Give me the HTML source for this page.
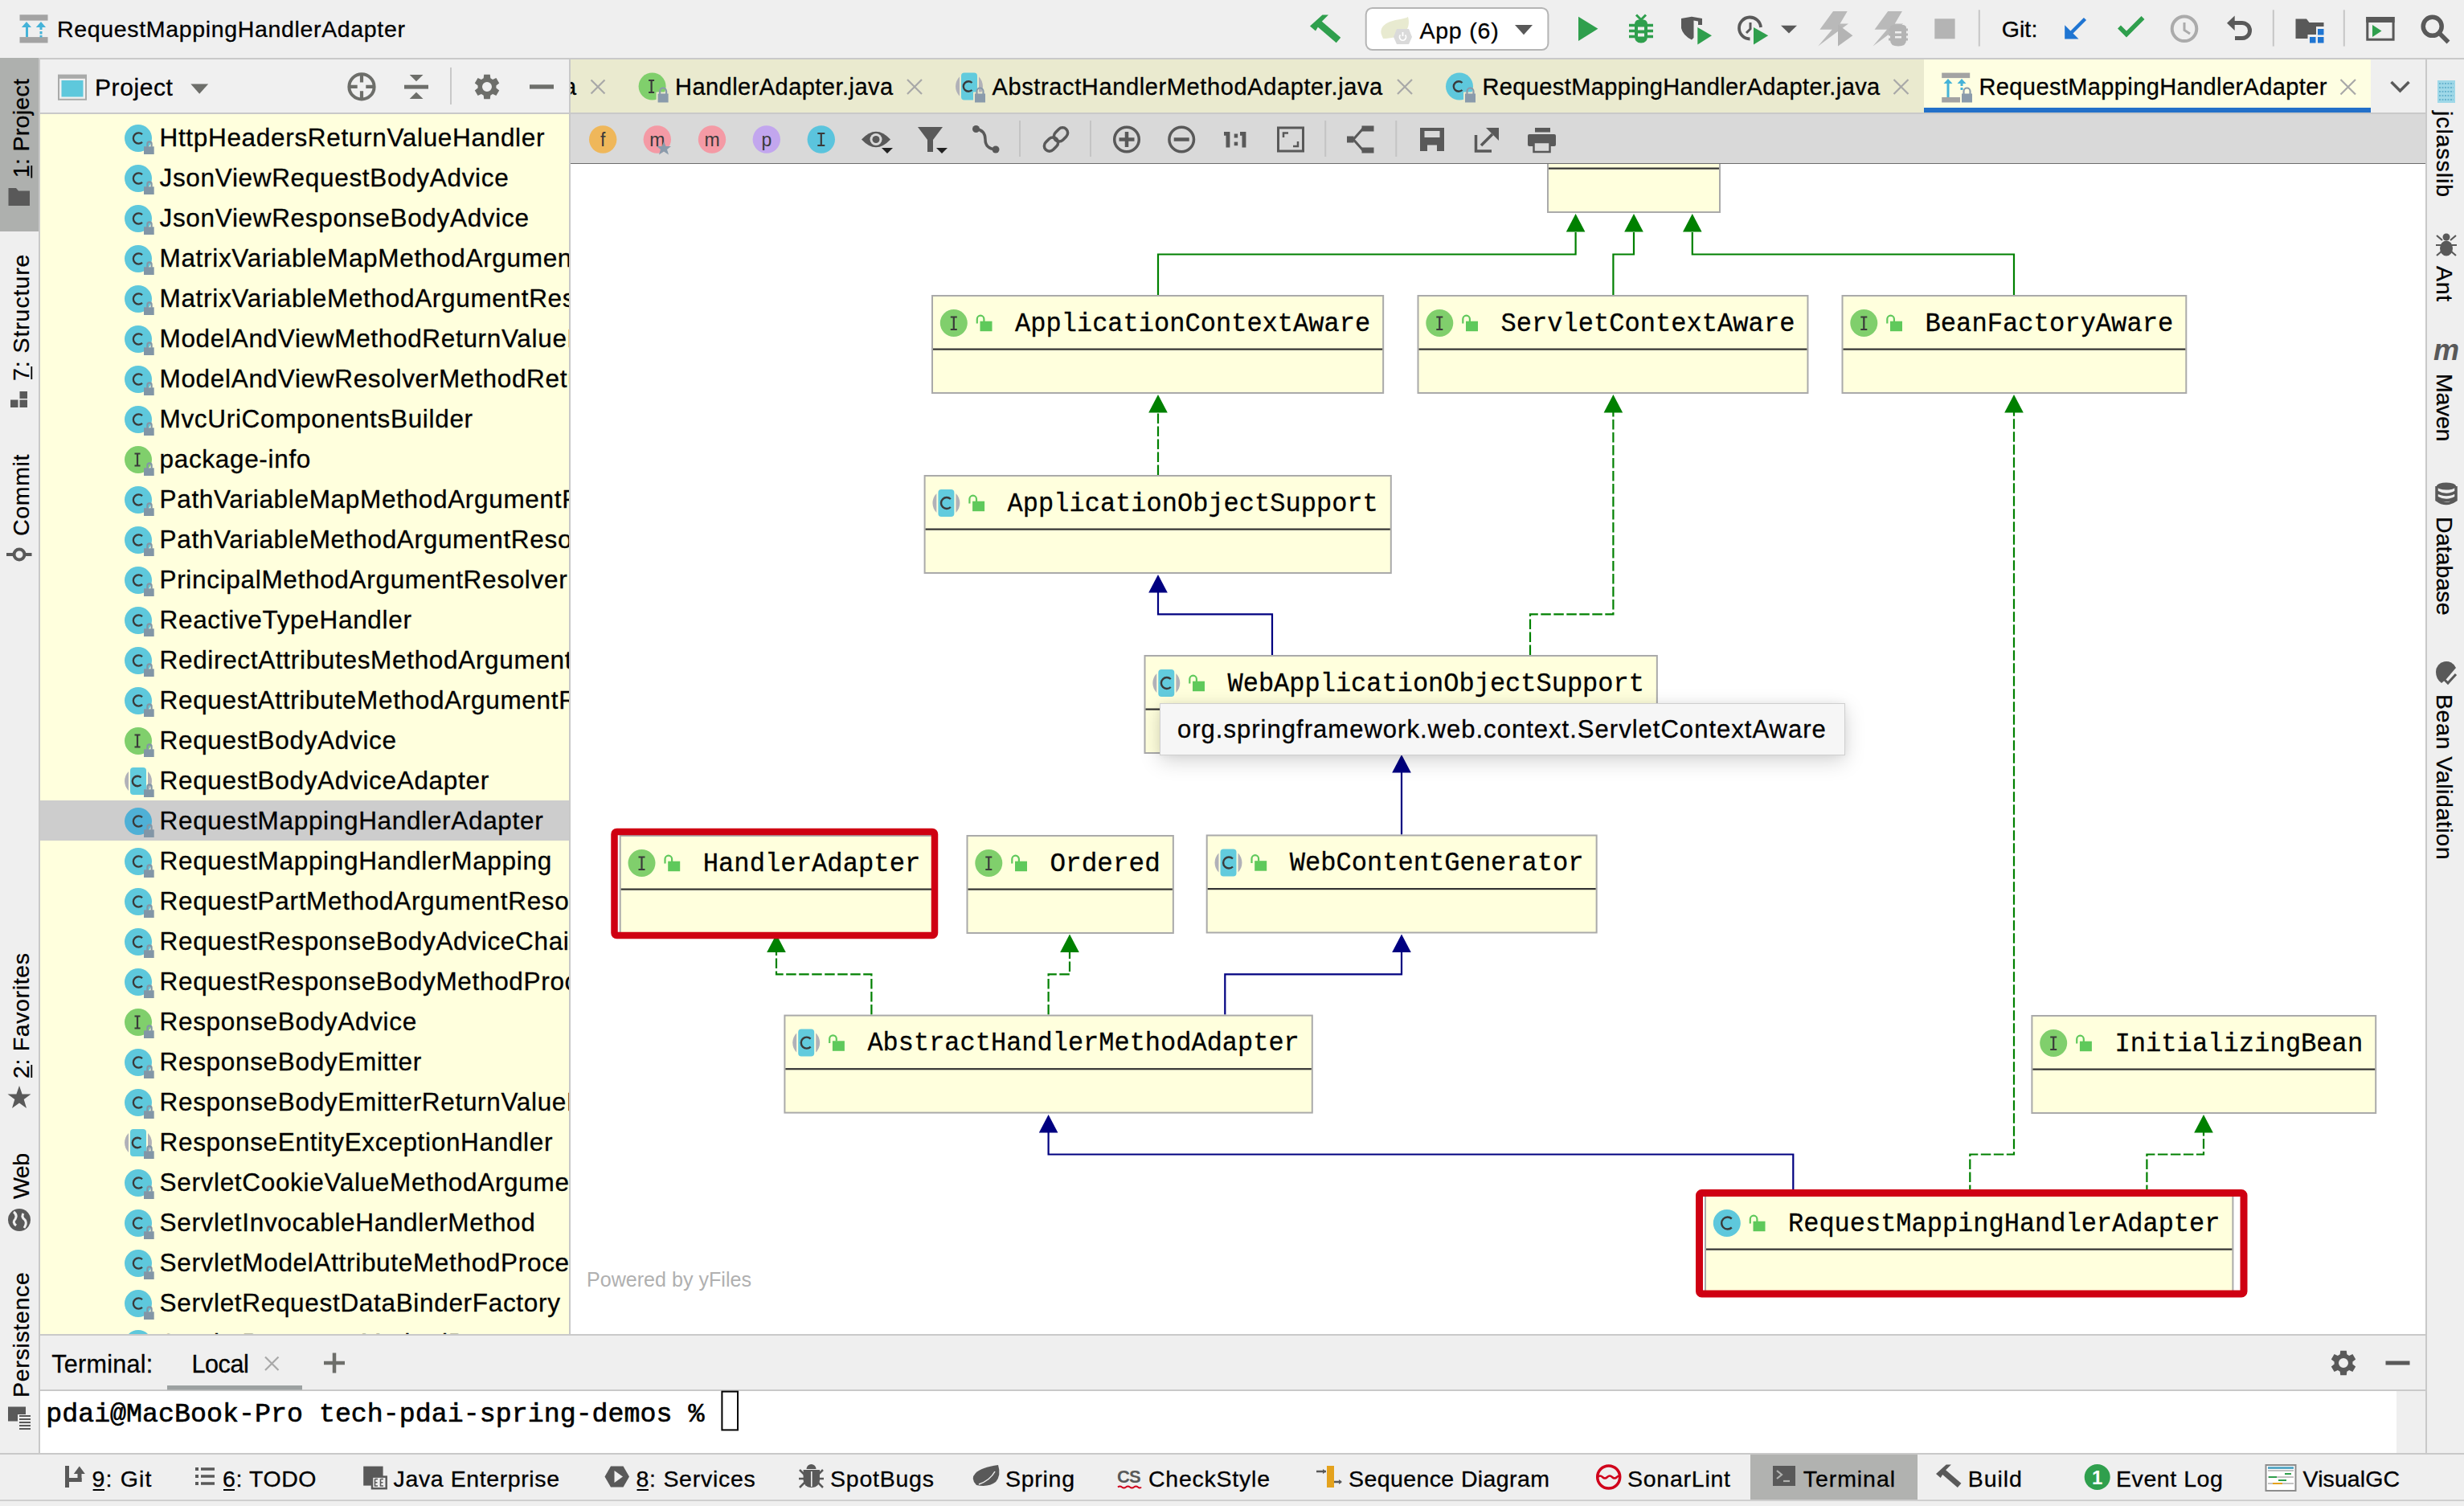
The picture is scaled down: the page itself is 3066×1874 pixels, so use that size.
<!DOCTYPE html>
<html><head><meta charset="utf-8">
<style>
*{margin:0;padding:0;box-sizing:border-box}
html,body{width:3066px;height:1874px;overflow:hidden;background:#efefef;font-family:"Liberation Sans",sans-serif;color:#000}
.a{position:absolute}
.t{position:absolute;white-space:pre;line-height:1;font-family:"Liberation Sans",sans-serif;-webkit-text-stroke:0.3px currentColor}
.m{position:absolute;white-space:pre;line-height:1;font-family:"Liberation Mono",monospace;-webkit-text-stroke:0.6px currentColor}
svg{position:absolute;overflow:visible}
</style></head><body>
<div class="a" style="left:0px;top:0px;width:3066px;height:72px;background:#efefef;"></div>
<div class="a" style="left:0px;top:72px;width:3066px;height:2px;background:#c9c9c9;"></div>
<div class="a" style="left:0px;top:74px;width:48px;height:1734px;background:#efefef;"></div>
<div class="a" style="left:48px;top:73px;width:2px;height:1735px;background:#c9c9c9;"></div>
<div class="a" style="left:0px;top:72px;width:48px;height:216px;background:#aeb0ae;"></div>
<div class="a" style="left:50px;top:74px;width:658px;height:66px;background:#f0f0f0;"></div>
<div class="a" style="left:50px;top:140px;width:658px;height:2px;background:#c9c9c9;"></div>
<div class="a" style="left:50px;top:142px;width:658px;height:1518px;background:#ffffdd;"></div>
<div class="a" style="left:708px;top:73px;width:2px;height:1587px;background:#c9c9c9;"></div>
<div class="a" style="left:710px;top:74px;width:2308px;height:67px;background:#eaeacf;"></div>
<div class="a" style="left:2394px;top:74px;width:556px;height:67px;background:#fefee2;"></div>
<div class="a" style="left:2394px;top:134px;width:556px;height:7px;background:#2370c9;"></div>
<div class="a" style="left:2950px;top:74px;width:68px;height:67px;background:#efefef;"></div>
<div class="a" style="left:710px;top:141px;width:2308px;height:62px;background:#d9d9d9;"></div>
<div class="a" style="left:710px;top:140px;width:2308px;height:2px;background:#c9c9c9;"></div>
<div class="a" style="left:710px;top:203px;width:2308px;height:2px;background:#6d6d6d;"></div>
<div class="a" style="left:710px;top:204px;width:2308px;height:1456px;background:#fff;"></div>
<div class="a" style="left:3018px;top:73px;width:2px;height:1735px;background:#c9c9c9;"></div>
<div class="a" style="left:3020px;top:74px;width:46px;height:1734px;background:#efefef;"></div>
<div class="a" style="left:50px;top:1660px;width:2968px;height:2px;background:#c9c9c9;"></div>
<div class="a" style="left:50px;top:1662px;width:2968px;height:67px;background:#efefef;"></div>
<div class="a" style="left:50px;top:1729px;width:2968px;height:2px;background:#c9c9c9;"></div>
<div class="a" style="left:50px;top:1731px;width:2932px;height:77px;background:#fff;"></div>
<div class="a" style="left:0px;top:1808px;width:3066px;height:2px;background:#c9c9c9;"></div>
<div class="a" style="left:0px;top:1810px;width:3066px;height:64px;background:#efefef;"></div>
<div class="a" style="left:0px;top:1866px;width:3066px;height:2px;background:#cfcfcf;"></div>
<div class="a" style="left:50px;top:142px;width:658px;height:1518px;overflow:hidden"><div class="t" style="margin-left:-50px;margin-top:-142px;left:198.5px;top:156.1825px;font-size:31.5px;letter-spacing:0.68px;color:#000;">HttpHeadersReturnValueHandler</div>
<div class="t" style="margin-left:-50px;margin-top:-142px;left:198.5px;top:206.1825px;font-size:31.5px;letter-spacing:0.68px;color:#000;">JsonViewRequestBodyAdvice</div>
<div class="t" style="margin-left:-50px;margin-top:-142px;left:198.5px;top:256.1825px;font-size:31.5px;letter-spacing:0.68px;color:#000;">JsonViewResponseBodyAdvice</div>
<div class="t" style="margin-left:-50px;margin-top:-142px;left:198.5px;top:306.1825px;font-size:31.5px;letter-spacing:0.68px;color:#000;">MatrixVariableMapMethodArgumentResolver</div>
<div class="t" style="margin-left:-50px;margin-top:-142px;left:198.5px;top:356.1825px;font-size:31.5px;letter-spacing:0.68px;color:#000;">MatrixVariableMethodArgumentResolver</div>
<div class="t" style="margin-left:-50px;margin-top:-142px;left:198.5px;top:406.1825px;font-size:31.5px;letter-spacing:0.68px;color:#000;">ModelAndViewMethodReturnValueHandler</div>
<div class="t" style="margin-left:-50px;margin-top:-142px;left:198.5px;top:456.1825px;font-size:31.5px;letter-spacing:0.68px;color:#000;">ModelAndViewResolverMethodReturnValueHandler</div>
<div class="t" style="margin-left:-50px;margin-top:-142px;left:198.5px;top:506.18249999999995px;font-size:31.5px;letter-spacing:0.68px;color:#000;">MvcUriComponentsBuilder</div>
<div class="t" style="margin-left:-50px;margin-top:-142px;left:198.5px;top:556.1825px;font-size:31.5px;letter-spacing:0.68px;color:#000;">package-info</div>
<div class="t" style="margin-left:-50px;margin-top:-142px;left:198.5px;top:606.1825px;font-size:31.5px;letter-spacing:0.68px;color:#000;">PathVariableMapMethodArgumentResolver</div>
<div class="t" style="margin-left:-50px;margin-top:-142px;left:198.5px;top:656.1825px;font-size:31.5px;letter-spacing:0.68px;color:#000;">PathVariableMethodArgumentResolver</div>
<div class="t" style="margin-left:-50px;margin-top:-142px;left:198.5px;top:706.1825px;font-size:31.5px;letter-spacing:0.68px;color:#000;">PrincipalMethodArgumentResolver</div>
<div class="t" style="margin-left:-50px;margin-top:-142px;left:198.5px;top:756.1825px;font-size:31.5px;letter-spacing:0.68px;color:#000;">ReactiveTypeHandler</div>
<div class="t" style="margin-left:-50px;margin-top:-142px;left:198.5px;top:806.1825px;font-size:31.5px;letter-spacing:0.68px;color:#000;">RedirectAttributesMethodArgumentResolver</div>
<div class="t" style="margin-left:-50px;margin-top:-142px;left:198.5px;top:856.1825px;font-size:31.5px;letter-spacing:0.68px;color:#000;">RequestAttributeMethodArgumentResolver</div>
<div class="t" style="margin-left:-50px;margin-top:-142px;left:198.5px;top:906.1825px;font-size:31.5px;letter-spacing:0.68px;color:#000;">RequestBodyAdvice</div>
<div class="t" style="margin-left:-50px;margin-top:-142px;left:198.5px;top:956.1825px;font-size:31.5px;letter-spacing:0.68px;color:#000;">RequestBodyAdviceAdapter</div>
<div class="a" style="margin-left:-50px;margin-top:-142px;left:50px;top:996px;width:658px;height:50px;background:#cdcdcd;"></div>
<div class="t" style="margin-left:-50px;margin-top:-142px;left:198.5px;top:1006.1825px;font-size:31.5px;letter-spacing:0.68px;color:#000;">RequestMappingHandlerAdapter</div>
<div class="t" style="margin-left:-50px;margin-top:-142px;left:198.5px;top:1056.1825px;font-size:31.5px;letter-spacing:0.68px;color:#000;">RequestMappingHandlerMapping</div>
<div class="t" style="margin-left:-50px;margin-top:-142px;left:198.5px;top:1106.1825px;font-size:31.5px;letter-spacing:0.68px;color:#000;">RequestPartMethodArgumentResolver</div>
<div class="t" style="margin-left:-50px;margin-top:-142px;left:198.5px;top:1156.1825px;font-size:31.5px;letter-spacing:0.68px;color:#000;">RequestResponseBodyAdviceChain</div>
<div class="t" style="margin-left:-50px;margin-top:-142px;left:198.5px;top:1206.1825px;font-size:31.5px;letter-spacing:0.68px;color:#000;">RequestResponseBodyMethodProcessor</div>
<div class="t" style="margin-left:-50px;margin-top:-142px;left:198.5px;top:1256.1825px;font-size:31.5px;letter-spacing:0.68px;color:#000;">ResponseBodyAdvice</div>
<div class="t" style="margin-left:-50px;margin-top:-142px;left:198.5px;top:1306.1825px;font-size:31.5px;letter-spacing:0.68px;color:#000;">ResponseBodyEmitter</div>
<div class="t" style="margin-left:-50px;margin-top:-142px;left:198.5px;top:1356.1825px;font-size:31.5px;letter-spacing:0.68px;color:#000;">ResponseBodyEmitterReturnValueHandler</div>
<div class="t" style="margin-left:-50px;margin-top:-142px;left:198.5px;top:1406.1825px;font-size:31.5px;letter-spacing:0.68px;color:#000;">ResponseEntityExceptionHandler</div>
<div class="t" style="margin-left:-50px;margin-top:-142px;left:198.5px;top:1456.1825px;font-size:31.5px;letter-spacing:0.68px;color:#000;">ServletCookieValueMethodArgumentResolver</div>
<div class="t" style="margin-left:-50px;margin-top:-142px;left:198.5px;top:1506.1825px;font-size:31.5px;letter-spacing:0.68px;color:#000;">ServletInvocableHandlerMethod</div>
<div class="t" style="margin-left:-50px;margin-top:-142px;left:198.5px;top:1556.1825px;font-size:31.5px;letter-spacing:0.68px;color:#000;">ServletModelAttributeMethodProcessor</div>
<div class="t" style="margin-left:-50px;margin-top:-142px;left:198.5px;top:1606.1825px;font-size:31.5px;letter-spacing:0.68px;color:#000;">ServletRequestDataBinderFactory</div>
<div class="t" style="margin-left:-50px;margin-top:-142px;left:198.5px;top:1656.1825px;font-size:31.5px;letter-spacing:0.68px;color:#000;">ServletResponseMethodProcessor</div>
<svg style="left:-50px;top:-142px" width="3066" height="1874"><circle cx="172" cy="172" r="17" fill="#5ec8dc"/><path d="M177 167.2A6.6 6.6 0 1 0 177 176.8" stroke="#3a3a3a" stroke-width="2.3" fill="none"/><rect x="179" y="182.3" width="12.7" height="9.7" fill="#8296a6"/><path d="M183.4 182.8v-3.8a2.6 2.6 0 0 1 5.2 0v3.8" stroke="#8296a6" stroke-width="2.2" fill="none"/><circle cx="172" cy="222" r="17" fill="#5ec8dc"/><path d="M177 217.2A6.6 6.6 0 1 0 177 226.8" stroke="#3a3a3a" stroke-width="2.3" fill="none"/><rect x="179" y="232.3" width="12.7" height="9.7" fill="#8296a6"/><path d="M183.4 232.8v-3.8a2.6 2.6 0 0 1 5.2 0v3.8" stroke="#8296a6" stroke-width="2.2" fill="none"/><circle cx="172" cy="272" r="17" fill="#5ec8dc"/><path d="M177 267.2A6.6 6.6 0 1 0 177 276.8" stroke="#3a3a3a" stroke-width="2.3" fill="none"/><rect x="179" y="282.3" width="12.7" height="9.7" fill="#8296a6"/><path d="M183.4 282.8v-3.8a2.6 2.6 0 0 1 5.2 0v3.8" stroke="#8296a6" stroke-width="2.2" fill="none"/><circle cx="172" cy="322" r="17" fill="#5ec8dc"/><path d="M177 317.2A6.6 6.6 0 1 0 177 326.8" stroke="#3a3a3a" stroke-width="2.3" fill="none"/><rect x="179" y="332.3" width="12.7" height="9.7" fill="#8296a6"/><path d="M183.4 332.8v-3.8a2.6 2.6 0 0 1 5.2 0v3.8" stroke="#8296a6" stroke-width="2.2" fill="none"/><circle cx="172" cy="372" r="17" fill="#5ec8dc"/><path d="M177 367.2A6.6 6.6 0 1 0 177 376.8" stroke="#3a3a3a" stroke-width="2.3" fill="none"/><rect x="179" y="382.3" width="12.7" height="9.7" fill="#8296a6"/><path d="M183.4 382.8v-3.8a2.6 2.6 0 0 1 5.2 0v3.8" stroke="#8296a6" stroke-width="2.2" fill="none"/><circle cx="172" cy="422" r="17" fill="#5ec8dc"/><path d="M177 417.2A6.6 6.6 0 1 0 177 426.8" stroke="#3a3a3a" stroke-width="2.3" fill="none"/><rect x="179" y="432.3" width="12.7" height="9.7" fill="#8296a6"/><path d="M183.4 432.8v-3.8a2.6 2.6 0 0 1 5.2 0v3.8" stroke="#8296a6" stroke-width="2.2" fill="none"/><circle cx="172" cy="472" r="17" fill="#5ec8dc"/><path d="M177 467.2A6.6 6.6 0 1 0 177 476.8" stroke="#3a3a3a" stroke-width="2.3" fill="none"/><rect x="179" y="482.3" width="12.7" height="9.7" fill="#8296a6"/><path d="M183.4 482.8v-3.8a2.6 2.6 0 0 1 5.2 0v3.8" stroke="#8296a6" stroke-width="2.2" fill="none"/><circle cx="172" cy="522" r="17" fill="#5ec8dc"/><path d="M177 517.2A6.6 6.6 0 1 0 177 526.8" stroke="#3a3a3a" stroke-width="2.3" fill="none"/><rect x="179" y="532.3" width="12.7" height="9.7" fill="#8296a6"/><path d="M183.4 532.8v-3.8a2.6 2.6 0 0 1 5.2 0v3.8" stroke="#8296a6" stroke-width="2.2" fill="none"/><circle cx="172" cy="572" r="17" fill="#80cf6c"/><path d="M167.5 564.5h7M167.5 579.5h7M171 564.5v15" stroke="#3a3a3a" stroke-width="2.2" fill="none"/><rect x="179" y="582.3" width="12.7" height="9.7" fill="#8296a6"/><path d="M183.4 582.8v-3.8a2.6 2.6 0 0 1 5.2 0v3.8" stroke="#8296a6" stroke-width="2.2" fill="none"/><circle cx="172" cy="622" r="17" fill="#5ec8dc"/><path d="M177 617.2A6.6 6.6 0 1 0 177 626.8" stroke="#3a3a3a" stroke-width="2.3" fill="none"/><rect x="179" y="632.3" width="12.7" height="9.7" fill="#8296a6"/><path d="M183.4 632.8v-3.8a2.6 2.6 0 0 1 5.2 0v3.8" stroke="#8296a6" stroke-width="2.2" fill="none"/><circle cx="172" cy="672" r="17" fill="#5ec8dc"/><path d="M177 667.2A6.6 6.6 0 1 0 177 676.8" stroke="#3a3a3a" stroke-width="2.3" fill="none"/><rect x="179" y="682.3" width="12.7" height="9.7" fill="#8296a6"/><path d="M183.4 682.8v-3.8a2.6 2.6 0 0 1 5.2 0v3.8" stroke="#8296a6" stroke-width="2.2" fill="none"/><circle cx="172" cy="722" r="17" fill="#5ec8dc"/><path d="M177 717.2A6.6 6.6 0 1 0 177 726.8" stroke="#3a3a3a" stroke-width="2.3" fill="none"/><rect x="179" y="732.3" width="12.7" height="9.7" fill="#8296a6"/><path d="M183.4 732.8v-3.8a2.6 2.6 0 0 1 5.2 0v3.8" stroke="#8296a6" stroke-width="2.2" fill="none"/><circle cx="172" cy="772" r="17" fill="#5ec8dc"/><path d="M177 767.2A6.6 6.6 0 1 0 177 776.8" stroke="#3a3a3a" stroke-width="2.3" fill="none"/><rect x="179" y="782.3" width="12.7" height="9.7" fill="#8296a6"/><path d="M183.4 782.8v-3.8a2.6 2.6 0 0 1 5.2 0v3.8" stroke="#8296a6" stroke-width="2.2" fill="none"/><circle cx="172" cy="822" r="17" fill="#5ec8dc"/><path d="M177 817.2A6.6 6.6 0 1 0 177 826.8" stroke="#3a3a3a" stroke-width="2.3" fill="none"/><rect x="179" y="832.3" width="12.7" height="9.7" fill="#8296a6"/><path d="M183.4 832.8v-3.8a2.6 2.6 0 0 1 5.2 0v3.8" stroke="#8296a6" stroke-width="2.2" fill="none"/><circle cx="172" cy="872" r="17" fill="#5ec8dc"/><path d="M177 867.2A6.6 6.6 0 1 0 177 876.8" stroke="#3a3a3a" stroke-width="2.3" fill="none"/><rect x="179" y="882.3" width="12.7" height="9.7" fill="#8296a6"/><path d="M183.4 882.8v-3.8a2.6 2.6 0 0 1 5.2 0v3.8" stroke="#8296a6" stroke-width="2.2" fill="none"/><circle cx="172" cy="922" r="17" fill="#80cf6c"/><path d="M167.5 914.5h7M167.5 929.5h7M171 914.5v15" stroke="#3a3a3a" stroke-width="2.2" fill="none"/><rect x="179" y="932.3" width="12.7" height="9.7" fill="#8296a6"/><path d="M183.4 932.8v-3.8a2.6 2.6 0 0 1 5.2 0v3.8" stroke="#8296a6" stroke-width="2.2" fill="none"/><path d="M160 960A17 17 0 0 0 160 984Z" fill="#b1b1b8"/><path d="M184 960A17 17 0 0 1 184 984Z" fill="#b1b1b8"/><rect x="162" y="955" width="20" height="34" rx="4" fill="#62cbdd"/><path d="M175.5 967.5A6.3 6.3 0 1 0 175.5 976.5" stroke="#3a3a3a" stroke-width="2.4" fill="none"/><rect x="179" y="982.3" width="12.7" height="9.7" fill="#8296a6"/><path d="M183.4 982.8v-3.8a2.6 2.6 0 0 1 5.2 0v3.8" stroke="#8296a6" stroke-width="2.2" fill="none"/><circle cx="172" cy="1022" r="17" fill="#4fb0d6"/><path d="M177 1017.2A6.6 6.6 0 1 0 177 1026.8" stroke="#3a3a3a" stroke-width="2.3" fill="none"/><rect x="179" y="1032.3" width="12.7" height="9.7" fill="#8296a6"/><path d="M183.4 1032.8v-3.8a2.6 2.6 0 0 1 5.2 0v3.8" stroke="#8296a6" stroke-width="2.2" fill="none"/><circle cx="172" cy="1072" r="17" fill="#5ec8dc"/><path d="M177 1067.2A6.6 6.6 0 1 0 177 1076.8" stroke="#3a3a3a" stroke-width="2.3" fill="none"/><rect x="179" y="1082.3" width="12.7" height="9.7" fill="#8296a6"/><path d="M183.4 1082.8v-3.8a2.6 2.6 0 0 1 5.2 0v3.8" stroke="#8296a6" stroke-width="2.2" fill="none"/><circle cx="172" cy="1122" r="17" fill="#5ec8dc"/><path d="M177 1117.2A6.6 6.6 0 1 0 177 1126.8" stroke="#3a3a3a" stroke-width="2.3" fill="none"/><rect x="179" y="1132.3" width="12.7" height="9.7" fill="#8296a6"/><path d="M183.4 1132.8v-3.8a2.6 2.6 0 0 1 5.2 0v3.8" stroke="#8296a6" stroke-width="2.2" fill="none"/><circle cx="172" cy="1172" r="17" fill="#5ec8dc"/><path d="M177 1167.2A6.6 6.6 0 1 0 177 1176.8" stroke="#3a3a3a" stroke-width="2.3" fill="none"/><rect x="179" y="1182.3" width="12.7" height="9.7" fill="#8296a6"/><path d="M183.4 1182.8v-3.8a2.6 2.6 0 0 1 5.2 0v3.8" stroke="#8296a6" stroke-width="2.2" fill="none"/><circle cx="172" cy="1222" r="17" fill="#5ec8dc"/><path d="M177 1217.2A6.6 6.6 0 1 0 177 1226.8" stroke="#3a3a3a" stroke-width="2.3" fill="none"/><rect x="179" y="1232.3" width="12.7" height="9.7" fill="#8296a6"/><path d="M183.4 1232.8v-3.8a2.6 2.6 0 0 1 5.2 0v3.8" stroke="#8296a6" stroke-width="2.2" fill="none"/><circle cx="172" cy="1272" r="17" fill="#80cf6c"/><path d="M167.5 1264.5h7M167.5 1279.5h7M171 1264.5v15" stroke="#3a3a3a" stroke-width="2.2" fill="none"/><rect x="179" y="1282.3" width="12.7" height="9.7" fill="#8296a6"/><path d="M183.4 1282.8v-3.8a2.6 2.6 0 0 1 5.2 0v3.8" stroke="#8296a6" stroke-width="2.2" fill="none"/><circle cx="172" cy="1322" r="17" fill="#5ec8dc"/><path d="M177 1317.2A6.6 6.6 0 1 0 177 1326.8" stroke="#3a3a3a" stroke-width="2.3" fill="none"/><rect x="179" y="1332.3" width="12.7" height="9.7" fill="#8296a6"/><path d="M183.4 1332.8v-3.8a2.6 2.6 0 0 1 5.2 0v3.8" stroke="#8296a6" stroke-width="2.2" fill="none"/><circle cx="172" cy="1372" r="17" fill="#5ec8dc"/><path d="M177 1367.2A6.6 6.6 0 1 0 177 1376.8" stroke="#3a3a3a" stroke-width="2.3" fill="none"/><rect x="179" y="1382.3" width="12.7" height="9.7" fill="#8296a6"/><path d="M183.4 1382.8v-3.8a2.6 2.6 0 0 1 5.2 0v3.8" stroke="#8296a6" stroke-width="2.2" fill="none"/><path d="M160 1410A17 17 0 0 0 160 1434Z" fill="#b1b1b8"/><path d="M184 1410A17 17 0 0 1 184 1434Z" fill="#b1b1b8"/><rect x="162" y="1405" width="20" height="34" rx="4" fill="#62cbdd"/><path d="M175.5 1417.5A6.3 6.3 0 1 0 175.5 1426.5" stroke="#3a3a3a" stroke-width="2.4" fill="none"/><rect x="179" y="1432.3" width="12.7" height="9.7" fill="#8296a6"/><path d="M183.4 1432.8v-3.8a2.6 2.6 0 0 1 5.2 0v3.8" stroke="#8296a6" stroke-width="2.2" fill="none"/><circle cx="172" cy="1472" r="17" fill="#5ec8dc"/><path d="M177 1467.2A6.6 6.6 0 1 0 177 1476.8" stroke="#3a3a3a" stroke-width="2.3" fill="none"/><rect x="179" y="1482.3" width="12.7" height="9.7" fill="#8296a6"/><path d="M183.4 1482.8v-3.8a2.6 2.6 0 0 1 5.2 0v3.8" stroke="#8296a6" stroke-width="2.2" fill="none"/><circle cx="172" cy="1522" r="17" fill="#5ec8dc"/><path d="M177 1517.2A6.6 6.6 0 1 0 177 1526.8" stroke="#3a3a3a" stroke-width="2.3" fill="none"/><rect x="179" y="1532.3" width="12.7" height="9.7" fill="#8296a6"/><path d="M183.4 1532.8v-3.8a2.6 2.6 0 0 1 5.2 0v3.8" stroke="#8296a6" stroke-width="2.2" fill="none"/><circle cx="172" cy="1572" r="17" fill="#5ec8dc"/><path d="M177 1567.2A6.6 6.6 0 1 0 177 1576.8" stroke="#3a3a3a" stroke-width="2.3" fill="none"/><rect x="179" y="1582.3" width="12.7" height="9.7" fill="#8296a6"/><path d="M183.4 1582.8v-3.8a2.6 2.6 0 0 1 5.2 0v3.8" stroke="#8296a6" stroke-width="2.2" fill="none"/><circle cx="172" cy="1622" r="17" fill="#5ec8dc"/><path d="M177 1617.2A6.6 6.6 0 1 0 177 1626.8" stroke="#3a3a3a" stroke-width="2.3" fill="none"/><rect x="179" y="1632.3" width="12.7" height="9.7" fill="#8296a6"/><path d="M183.4 1632.8v-3.8a2.6 2.6 0 0 1 5.2 0v3.8" stroke="#8296a6" stroke-width="2.2" fill="none"/><circle cx="172" cy="1672" r="17" fill="#5ec8dc"/><path d="M177 1667.2A6.6 6.6 0 1 0 177 1676.8" stroke="#3a3a3a" stroke-width="2.3" fill="none"/><rect x="179" y="1682.3" width="12.7" height="9.7" fill="#8296a6"/><path d="M183.4 1682.8v-3.8a2.6 2.6 0 0 1 5.2 0v3.8" stroke="#8296a6" stroke-width="2.2" fill="none"/></svg></div>
<svg style="left:710px;top:204px" width="2308" height="1456" viewBox="710 204 2308 1456"><defs><clipPath id="cv"><rect x="710" y="204" width="2308" height="1456"/></clipPath></defs><g clip-path="url(#cv)"><path d="M1441 367 L1441 316.5 L1960.6 316.5 L1960.6 289" stroke="#008000" stroke-width="2.2" fill="none"/><path d="M1960.6 266L1972.3999999999999 288.5H1948.8Z" fill="#008000"/><path d="M2007.4 367 L2007.4 316.5 L2033 316.5 L2033 289" stroke="#008000" stroke-width="2.2" fill="none"/><path d="M2033 266L2044.8 288.5H2021.2Z" fill="#008000"/><path d="M2506 367 L2506 316.5 L2105.8 316.5 L2105.8 289" stroke="#008000" stroke-width="2.2" fill="none"/><path d="M2105.8 266L2117.6000000000004 288.5H2094.0Z" fill="#008000"/><path d="M1441 591 L1441 513" stroke="#008000" stroke-width="2.2" fill="none" stroke-dasharray="12.5 3.5"/><path d="M1441 491L1452.8 513.5H1429.2Z" fill="#008000"/><path d="M1583 815 L1583 764.3 L1441 764.3 L1441 737" stroke="#000080" stroke-width="2.2" fill="none"/><path d="M1441 715L1452.8 737.5H1429.2Z" fill="#000080"/><path d="M1904 815 L1904 764.3 L2007.4 764.3 L2007.4 513" stroke="#008000" stroke-width="2.2" fill="none" stroke-dasharray="12.5 3.5"/><path d="M2007.4 491L2019.2 513.5H1995.6000000000001Z" fill="#008000"/><path d="M1744 1038.5 L1744 961" stroke="#000080" stroke-width="2.2" fill="none"/><path d="M1744 939L1755.8 961.5H1732.2Z" fill="#000080"/><path d="M1084.4 1262.6 L1084.4 1212.3 L966 1212.3 L966 1185" stroke="#008000" stroke-width="2.2" fill="none" stroke-dasharray="12.5 3.5"/><path d="M966 1162.5L977.8 1185.0H954.2Z" fill="#008000"/><path d="M1304.6 1262.6 L1304.6 1212.3 L1331 1212.3 L1331 1185" stroke="#008000" stroke-width="2.2" fill="none" stroke-dasharray="12.5 3.5"/><path d="M1331 1162.5L1342.8 1185.0H1319.2Z" fill="#008000"/><path d="M1524.3 1262.6 L1524.3 1212.3 L1744 1212.3 L1744 1185" stroke="#000080" stroke-width="2.2" fill="none"/><path d="M1744 1162.5L1755.8 1185.0H1732.2Z" fill="#000080"/><path d="M2231.3 1487 L2231.3 1436.5 L1304.6 1436.5 L1304.6 1409" stroke="#000080" stroke-width="2.2" fill="none"/><path d="M1304.6 1387L1316.3999999999999 1409.5H1292.8Z" fill="#000080"/><path d="M2451.3 1487 L2451.3 1436.5 L2506 1436.5 L2506 513" stroke="#008000" stroke-width="2.2" fill="none" stroke-dasharray="12.5 3.5"/><path d="M2506 491L2517.8 513.5H2494.2Z" fill="#008000"/><path d="M2671.4 1487 L2671.4 1436.5 L2742 1436.5 L2742 1409" stroke="#008000" stroke-width="2.2" fill="none" stroke-dasharray="12.5 3.5"/><path d="M2742 1387L2753.8 1409.5H2730.2Z" fill="#008000"/><rect x="1926" y="143" width="214" height="121" fill="#ffffdd" stroke="#aaaaaa" stroke-width="2"/><rect x="1927" y="208.5" width="212" height="2.2" fill="#333"/><rect x="1160" y="368" width="561.1500000000001" height="121" fill="#ffffdd" stroke="#aaaaaa" stroke-width="2"/><rect x="1161" y="433.5" width="559.1500000000001" height="2.2" fill="#333"/><circle cx="1186.8" cy="402" r="17" fill="#80cf6c"/><path d="M1182.8 394.5h8M1182.8 410h8M1186.8 394.5v15.5" stroke="#3a3a3a" stroke-width="2.2" fill="none"/><rect x="1219.5" y="399.7" width="15" height="12.5" fill="#5fc95b"/><path d="M1215.8 402.5V397a4.3 4.3 0 0 1 8.6 0V400" stroke="#5fc95b" stroke-width="2.2" fill="none"/><text x="1263" y="411.5" font-family="Liberation Mono" font-size="34" textLength="442.2" lengthAdjust="spacingAndGlyphs" fill="#000" stroke="#000" stroke-width="0.3">ApplicationContextAware</text><rect x="1764.5" y="368" width="484.95" height="121" fill="#ffffdd" stroke="#aaaaaa" stroke-width="2"/><rect x="1765.5" y="433.5" width="482.95" height="2.2" fill="#333"/><circle cx="1791.3" cy="402" r="17" fill="#80cf6c"/><path d="M1787.3 394.5h8M1787.3 410h8M1791.3 394.5v15.5" stroke="#3a3a3a" stroke-width="2.2" fill="none"/><rect x="1824.0" y="399.7" width="15" height="12.5" fill="#5fc95b"/><path d="M1820.3 402.5V397a4.3 4.3 0 0 1 8.6 0V400" stroke="#5fc95b" stroke-width="2.2" fill="none"/><text x="1867.5" y="411.5" font-family="Liberation Mono" font-size="34" textLength="365.9" lengthAdjust="spacingAndGlyphs" fill="#000" stroke="#000" stroke-width="0.3">ServletContextAware</text><rect x="2292.5" y="368" width="427.8" height="121" fill="#ffffdd" stroke="#aaaaaa" stroke-width="2"/><rect x="2293.5" y="433.5" width="425.8" height="2.2" fill="#333"/><circle cx="2319.3" cy="402" r="17" fill="#80cf6c"/><path d="M2315.3 394.5h8M2315.3 410h8M2319.3 394.5v15.5" stroke="#3a3a3a" stroke-width="2.2" fill="none"/><rect x="2352.0" y="399.7" width="15" height="12.5" fill="#5fc95b"/><path d="M2348.3 402.5V397a4.3 4.3 0 0 1 8.6 0V400" stroke="#5fc95b" stroke-width="2.2" fill="none"/><text x="2395.5" y="411.5" font-family="Liberation Mono" font-size="34" textLength="308.8" lengthAdjust="spacingAndGlyphs" fill="#000" stroke="#000" stroke-width="0.3">BeanFactoryAware</text><rect x="1150.6" y="592" width="580.2" height="121" fill="#ffffdd" stroke="#aaaaaa" stroke-width="2"/><rect x="1151.6" y="657.5" width="578.2" height="2.2" fill="#333"/><path d="M1165.3999999999999 614A17 17 0 0 0 1165.3999999999999 638Z" fill="#b1b1b8"/><path d="M1189.3999999999999 614A17 17 0 0 1 1189.3999999999999 638Z" fill="#b1b1b8"/><rect x="1167.3999999999999" y="609" width="20" height="34" rx="4" fill="#62cbdd"/><path d="M1182.8999999999999 621A7 7 0 1 0 1182.8999999999999 631" stroke="#3a3a3a" stroke-width="2.4" fill="none"/><rect x="1210.1" y="623.7" width="15" height="12.5" fill="#5fc95b"/><path d="M1206.3999999999999 626.5V621a4.3 4.3 0 0 1 8.6 0V624" stroke="#5fc95b" stroke-width="2.2" fill="none"/><text x="1253.6" y="635.5" font-family="Liberation Mono" font-size="34" textLength="461.2" lengthAdjust="spacingAndGlyphs" fill="#000" stroke="#000" stroke-width="0.3">ApplicationObjectSupport</text><rect x="1424.5" y="816" width="637.35" height="121" fill="#ffffdd" stroke="#aaaaaa" stroke-width="2"/><rect x="1425.5" y="881.5" width="635.35" height="2.2" fill="#333"/><path d="M1439.3 838A17 17 0 0 0 1439.3 862Z" fill="#b1b1b8"/><path d="M1463.3 838A17 17 0 0 1 1463.3 862Z" fill="#b1b1b8"/><rect x="1441.3" y="833" width="20" height="34" rx="4" fill="#62cbdd"/><path d="M1456.8 845A7 7 0 1 0 1456.8 855" stroke="#3a3a3a" stroke-width="2.4" fill="none"/><rect x="1484.0" y="847.7" width="15" height="12.5" fill="#5fc95b"/><path d="M1480.3 850.5V845a4.3 4.3 0 0 1 8.6 0V848" stroke="#5fc95b" stroke-width="2.2" fill="none"/><text x="1527.5" y="859.5" font-family="Liberation Mono" font-size="34" textLength="518.4" lengthAdjust="spacingAndGlyphs" fill="#000" stroke="#000" stroke-width="0.3">WebApplicationObjectSupport</text><rect x="771.7" y="1040" width="389.7" height="121" fill="#ffffdd" stroke="#aaaaaa" stroke-width="2"/><rect x="772.7" y="1105.5" width="387.7" height="2.2" fill="#333"/><circle cx="798.5" cy="1074" r="17" fill="#80cf6c"/><path d="M794.5 1066.5h8M794.5 1082h8M798.5 1066.5v15.5" stroke="#3a3a3a" stroke-width="2.2" fill="none"/><rect x="831.2" y="1071.7" width="15" height="12.5" fill="#5fc95b"/><path d="M827.5 1074.5V1069a4.3 4.3 0 0 1 8.6 0V1072" stroke="#5fc95b" stroke-width="2.2" fill="none"/><text x="874.7" y="1083.5" font-family="Liberation Mono" font-size="34" textLength="270.7" lengthAdjust="spacingAndGlyphs" fill="#000" stroke="#000" stroke-width="0.3">HandlerAdapter</text><rect x="1203.5" y="1040" width="256.35" height="121" fill="#ffffdd" stroke="#aaaaaa" stroke-width="2"/><rect x="1204.5" y="1105.5" width="254.35000000000002" height="2.2" fill="#333"/><circle cx="1230.3" cy="1074" r="17" fill="#80cf6c"/><path d="M1226.3 1066.5h8M1226.3 1082h8M1230.3 1066.5v15.5" stroke="#3a3a3a" stroke-width="2.2" fill="none"/><rect x="1263.0" y="1071.7" width="15" height="12.5" fill="#5fc95b"/><path d="M1259.3 1074.5V1069a4.3 4.3 0 0 1 8.6 0V1072" stroke="#5fc95b" stroke-width="2.2" fill="none"/><text x="1306.5" y="1083.5" font-family="Liberation Mono" font-size="34" textLength="137.3" lengthAdjust="spacingAndGlyphs" fill="#000" stroke="#000" stroke-width="0.3">Ordered</text><rect x="1501.7" y="1039.5" width="484.95" height="121" fill="#ffffdd" stroke="#aaaaaa" stroke-width="2"/><rect x="1502.7" y="1105.0" width="482.95" height="2.2" fill="#333"/><path d="M1516.5 1061.5A17 17 0 0 0 1516.5 1085.5Z" fill="#b1b1b8"/><path d="M1540.5 1061.5A17 17 0 0 1 1540.5 1085.5Z" fill="#b1b1b8"/><rect x="1518.5" y="1056.5" width="20" height="34" rx="4" fill="#62cbdd"/><path d="M1534.0 1068.5A7 7 0 1 0 1534.0 1078.5" stroke="#3a3a3a" stroke-width="2.4" fill="none"/><rect x="1561.2" y="1071.2" width="15" height="12.5" fill="#5fc95b"/><path d="M1557.5 1074.0V1068.5a4.3 4.3 0 0 1 8.6 0V1071.5" stroke="#5fc95b" stroke-width="2.2" fill="none"/><text x="1604.7" y="1083.0" font-family="Liberation Mono" font-size="34" textLength="365.9" lengthAdjust="spacingAndGlyphs" fill="#000" stroke="#000" stroke-width="0.3">WebContentGenerator</text><rect x="976.4" y="1263.6" width="656.4" height="121" fill="#ffffdd" stroke="#aaaaaa" stroke-width="2"/><rect x="977.4" y="1329.1" width="654.4" height="2.2" fill="#333"/><path d="M991.1999999999999 1285.6A17 17 0 0 0 991.1999999999999 1309.6Z" fill="#b1b1b8"/><path d="M1015.1999999999999 1285.6A17 17 0 0 1 1015.1999999999999 1309.6Z" fill="#b1b1b8"/><rect x="993.1999999999999" y="1280.6" width="20" height="34" rx="4" fill="#62cbdd"/><path d="M1008.6999999999999 1292.6A7 7 0 1 0 1008.6999999999999 1302.6" stroke="#3a3a3a" stroke-width="2.4" fill="none"/><rect x="1035.9" y="1295.3" width="15" height="12.5" fill="#5fc95b"/><path d="M1032.2 1298.1V1292.6a4.3 4.3 0 0 1 8.6 0V1295.6" stroke="#5fc95b" stroke-width="2.2" fill="none"/><text x="1079.4" y="1307.1" font-family="Liberation Mono" font-size="34" textLength="537.4" lengthAdjust="spacingAndGlyphs" fill="#000" stroke="#000" stroke-width="0.3">AbstractHandlerMethodAdapter</text><rect x="2528.4" y="1264" width="427.8" height="121" fill="#ffffdd" stroke="#aaaaaa" stroke-width="2"/><rect x="2529.4" y="1329.5" width="425.8" height="2.2" fill="#333"/><circle cx="2555.2000000000003" cy="1298" r="17" fill="#80cf6c"/><path d="M2551.2000000000003 1290.5h8M2551.2000000000003 1306h8M2555.2000000000003 1290.5v15.5" stroke="#3a3a3a" stroke-width="2.2" fill="none"/><rect x="2587.9" y="1295.7" width="15" height="12.5" fill="#5fc95b"/><path d="M2584.2000000000003 1298.5V1293a4.3 4.3 0 0 1 8.6 0V1296" stroke="#5fc95b" stroke-width="2.2" fill="none"/><text x="2631.4" y="1307.5" font-family="Liberation Mono" font-size="34" textLength="308.8" lengthAdjust="spacingAndGlyphs" fill="#000" stroke="#000" stroke-width="0.3">InitializingBean</text><rect x="2122" y="1488" width="656.4" height="121" fill="#ffffdd" stroke="#aaaaaa" stroke-width="2"/><rect x="2123" y="1553.5" width="654.4" height="2.2" fill="#333"/><circle cx="2148.8" cy="1522" r="17" fill="#5ec8dc"/><path d="M2154.8 1516.5A7.5 7.5 0 1 0 2154.8 1527.5" stroke="#3a3a3a" stroke-width="2.4" fill="none"/><rect x="2181.5" y="1519.7" width="15" height="12.5" fill="#5fc95b"/><path d="M2177.8 1522.5V1517a4.3 4.3 0 0 1 8.6 0V1520" stroke="#5fc95b" stroke-width="2.2" fill="none"/><text x="2225" y="1531.5" font-family="Liberation Mono" font-size="34" textLength="537.4" lengthAdjust="spacingAndGlyphs" fill="#000" stroke="#000" stroke-width="0.3">RequestMappingHandlerAdapter</text><rect x="764.5" y="1035" width="398.5" height="129" rx="3" fill="none" stroke="#cf0012" stroke-width="8.5"/><rect x="2114.5" y="1484.5" width="677.5" height="125.5" rx="3" fill="none" stroke="#cf0012" stroke-width="9"/><text x="730" y="1601" font-family="Liberation Sans" font-size="26.5" textLength="205" lengthAdjust="spacingAndGlyphs" fill="#b0b0b0">Powered by yFiles</text></g></svg>
<div class="a" style="left:1443px;top:875px;width:853px;height:65px;background:#f6f6f6;border:1px solid #cfcfcf;box-shadow:0 7px 26px rgba(0,0,0,0.17),0 0 10px rgba(0,0,0,0.06)"></div>
<div class="t" style="left:1465px;top:892px;font-size:31px;letter-spacing:1.02px;color:#000">org.springframework.web.context.ServletContextAware</div>
<svg style="left:0;top:0" width="3066" height="1874"><rect x="24.5" y="18.3" width="35" height="7.3" fill="#a3a3a3"/><rect x="24.5" y="46.1" width="35" height="7.3" fill="#a3a3a3"/><path d="M26.9 34L33 27L39 34H35V46H32V34Z" fill="#45b3d8"/><path d="M44.8 34L51 27L57 34H52.5V37H49.5V34ZM49.5 39h3v3.5h-3zM49.5 44h3v2.5h-3z" fill="#45b3d8"/><path d="M1630 32.5L1645.5 18.5H1653L1649 22.5L1643 28.5L1637 38.5Z" fill="#2f9f4d"/><path d="M1641 29L1665.5 50" stroke="#2f9f4d" stroke-width="8.5"/><rect x="1699.7" y="9.9" width="226.7" height="52.2" rx="8" fill="#fff" stroke="#b5b5b5" stroke-width="2"/><path d="M1719 43C1716 33 1726 26 1742 24C1749 23 1752 21 1752 21C1754 28 1753 35 1748 40C1742 46 1730 48 1721 48Z" fill="#e8ead0"/><path d="M1738 36H1753L1757 46L1753 55H1738L1734 46Z" fill="#dadada"/><path d="M1742.5 43.5A4 4 0 1 0 1748.5 43.5M1745.5 40V45" stroke="#fff" stroke-width="1.8" fill="none"/><path d="M1885 31H1907L1896 43.3Z" fill="#595959"/><path d="M1964 20.8V51L1988.4 35.8Z" fill="#2f9f4d"/><path d="M2036 18.5L2042 24.5M2048 18.5L2042 24.5" stroke="#2f9f4d" stroke-width="3"/><path d="M2034 30Q2034 24 2042 24Q2050 24 2050 30V45Q2050 53.5 2042 53.5Q2034 53.5 2034 45Z" fill="#2f9f4d"/><path d="M2027 31.5H2057M2027 38.5H2057M2027 45.5H2057" stroke="#2f9f4d" stroke-width="3.5"/><rect x="2038" y="33.5" width="8" height="4" fill="#efefef"/><rect x="2038" y="41.5" width="8" height="4" fill="#efefef"/><path d="M2092 23L2105 20.8L2118 23V31H2113V26.5L2107.5 25.5V47L2105 49.5Q2094 44 2092 35Z" fill="#595959"/><path d="M2112.3 33.9V55.5L2130 44.3Z" fill="#2f9f4d"/><path d="M2191 34A13.5 13.5 0 1 0 2177.5 48.5" stroke="#595959" stroke-width="3.8" fill="none"/><path d="M2178 28V36L2173 41" stroke="#595959" stroke-width="3" fill="none"/><path d="M2182 33.9V55.5L2200.2 44.3Z" fill="#2f9f4d"/><path d="M2216 31.8H2236L2226 41.5Z" fill="#595959"/><path transform="translate(0 0)" d="M2281 14.1H2298.7L2289.6 29.4H2300L2262.2 57.4L2279.8 36.7H2264.4Z" fill="#b9b9b9"/><path transform="translate(68.2 0)" d="M2281 14.1H2298.7L2289.6 29.4H2300L2262.2 57.4L2279.8 36.7H2264.4Z" fill="#b9b9b9"/><path d="M2287 30.6V57.4L2305.4 44.2Z" fill="#b4b4b4"/><path d="M2352 34Q2352 30.6 2362 30.6Q2372 30.6 2372 34V50Q2372 57.6 2362 57.6Q2352 57.6 2352 50Z" fill="#b4b4b4"/><path d="M2350 37H2374M2350 43H2374M2350 49H2374" stroke="#b4b4b4" stroke-width="3"/><rect x="2358" y="39" width="8" height="2.5" fill="#efefef"/><rect x="2358" y="45" width="8" height="2.5" fill="#efefef"/><rect x="2407.3" y="23.3" width="25.3" height="25" fill="#b4b4b4"/><rect x="2461.8" y="12.3" width="2" height="45.3" fill="#c6c6c6"/><rect x="2827.8" y="12.3" width="2" height="45.3" fill="#c6c6c6"/><rect x="2915.8" y="12.3" width="2" height="45.3" fill="#c6c6c6"/><path d="M2569.2 31.2V48.5H2586.5Z" fill="#1f75d2"/><path d="M2576 42L2594.5 23.5" stroke="#1f75d2" stroke-width="4.5"/><path d="M2637 33.5L2646 42.5L2666.5 22" stroke="#2f9f4d" stroke-width="5.5" fill="none"/><circle cx="2718" cy="35.8" r="15.3" stroke="#ababab" stroke-width="4" fill="none"/><path d="M2718 28V37.5L2725 42" stroke="#ababab" stroke-width="3" fill="none"/><path d="M2771 28.7L2780.7 19.4V37.9Z" fill="#595959"/><path d="M2779 28.5H2790A9.5 9.5 0 0 1 2790 47.5H2781" stroke="#595959" stroke-width="5" fill="none"/><path d="M2856.5 23.5H2870L2873.5 28H2891.5V33H2882V43H2871.5V48H2856.5Z" fill="#595959"/><rect x="2884" y="36" width="7.5" height="7.5" fill="#1f75d2"/><rect x="2874" y="46" width="7.5" height="7.5" fill="#1f75d2"/><rect x="2884" y="46" width="7.5" height="7.5" fill="#1f75d2"/><rect x="2945.8" y="22.5" width="32.3" height="26.7" stroke="#595959" stroke-width="3" fill="none"/><rect x="2944.3" y="21" width="35.3" height="7" fill="#595959"/><path d="M2952 31V46L2963.5 38.5Z" fill="#2f9f4d"/><circle cx="3026.7" cy="32.8" r="11.5" stroke="#595959" stroke-width="5.5" fill="none"/><path d="M3034.5 40.5L3046.5 52.5" stroke="#595959" stroke-width="5.5"/><rect x="73" y="93.8" width="34" height="30" fill="none" stroke="#a9aaa9" stroke-width="2"/><rect x="72" y="92.8" width="36" height="5" fill="#a9aaa9"/><rect x="76.5" y="100" width="27" height="20.5" fill="#5ec8dc"/><path d="M237.3 104.5H259.2L248.2 116.8Z" fill="#6d6e6a"/><circle cx="450" cy="107.9" r="15.6" stroke="#6d6e6a" stroke-width="4" fill="none"/><path d="M450 92V102.4M450 113.3V124M434 107.9H444.7M455.3 107.9H466" stroke="#6d6e6a" stroke-width="4.2"/><path d="M509.7 93H526.5L518 101.2Z M509.7 123H526.5L518 114.7Z" fill="#6d6e6a"/><rect x="503" y="105.7" width="30" height="4.9" fill="#6d6e6a"/><rect x="560" y="84" width="2" height="46" fill="#c8c8c8"/><path d="M602.2 92.7 L609.8 92.7 L610.3 97.3 L613.1 98.9 L617.4 97.0 L621.2 103.6 L617.4 106.4 L617.4 109.6 L621.2 112.4 L617.4 119.0 L613.1 117.1 L610.3 118.7 L609.8 123.3 L602.2 123.3 L601.7 118.7 L598.9 117.1 L594.6 119.0 L590.8 112.4 L594.6 109.6 L594.6 106.4 L590.8 103.6 L594.6 97.0 L598.9 98.9 L601.7 97.3Z M612 108A6 6 0 1 0 600 108A6 6 0 1 0 612 108Z" fill="#6d6e6a" fill-rule="evenodd"/><rect x="659" y="105.3" width="30" height="5.3" fill="#6d6e6a"/><path d="M735.5 99.5L752.5 116.5M752.5 99.5L735.5 116.5" stroke="#a8a8a8" stroke-width="2.2"/><circle cx="811.6" cy="107.5" r="17" fill="#80cf6c"/><path d="M807.1 100.0h7M807.1 115.0h7M810.6 100.0v15" stroke="#3a3a3a" stroke-width="2.2" fill="none"/><rect x="816.6" y="114.5" width="17" height="15" fill="#eaeacf"/><rect x="818.6" y="116.5" width="13" height="11" fill="#8a9bab"/><path d="M821.1 117.5v-4a4 4 0 0 1 8 0v4" stroke="#8a9bab" stroke-width="2.2" fill="none"/><path d="M1129 99L1147 117M1147 99L1129 117" stroke="#a8a8a8" stroke-width="2.2"/><path d="M1194 95.5A17 17 0 0 0 1194 119.5Z" fill="#b1b1b8"/><path d="M1218 95.5A17 17 0 0 1 1218 119.5Z" fill="#b1b1b8"/><rect x="1196" y="90.5" width="20" height="34" rx="4" fill="#62cbdd"/><path d="M1209.5 103.0A6.3 6.3 0 1 0 1209.5 112.0" stroke="#3a3a3a" stroke-width="2.4" fill="none"/><rect x="1211" y="114.5" width="17" height="15" fill="#eaeacf"/><rect x="1213" y="116.5" width="13" height="11" fill="#8a9bab"/><path d="M1215.5 117.5v-4a4 4 0 0 1 8 0v4" stroke="#8a9bab" stroke-width="2.2" fill="none"/><path d="M1739 99L1757 117M1757 99L1739 117" stroke="#a8a8a8" stroke-width="2.2"/><circle cx="1816" cy="107.5" r="17" fill="#5ec8dc"/><path d="M1819.5 103.0A6.3 6.3 0 1 0 1819.5 112.0" stroke="#3a3a3a" stroke-width="2.4" fill="none"/><rect x="1821" y="114.5" width="17" height="15" fill="#eaeacf"/><rect x="1823" y="116.5" width="13" height="11" fill="#8a9bab"/><path d="M1825.5 117.5v-4a4 4 0 0 1 8 0v4" stroke="#8a9bab" stroke-width="2.2" fill="none"/><path d="M2356.5 99L2374.5 117M2374.5 99L2356.5 117" stroke="#a8a8a8" stroke-width="2.2"/><rect x="2416.2" y="90.6" width="35" height="6.5" fill="#a3a3a3"/><rect x="2416.2" y="121" width="35" height="6.5" fill="#a3a3a3"/><path d="M2418.5 104L2424 98L2429.5 104H2425.5V121H2422.5V104Z" fill="#45b3d8"/><path d="M2435.5 104L2441 98L2446.5 104H2442.5V107H2439.5V104ZM2439.5 109h3v3h-3z" fill="#45b3d8"/><rect x="2439" y="114.5" width="17" height="15" fill="#fefee2"/><rect x="2441" y="116.5" width="13" height="11" fill="#8a9bab"/><path d="M2443.5 117.5v-4a4 4 0 0 1 8 0v4" stroke="#8a9bab" stroke-width="2.2" fill="none"/><path d="M2912.5 99L2931 117.5M2931 99L2912.5 117.5" stroke="#a8a8a8" stroke-width="2.2"/><path d="M2975.5 102L2986.5 113L2997.5 102" stroke="#595959" stroke-width="3.5" fill="none"/><circle cx="750.2" cy="173.5" r="17.2" fill="#efb75a"/><text x="750.2" y="181.5" text-anchor="middle" font-family="Liberation Sans" font-size="23" fill="#3a3a3a">f</text><circle cx="817.8" cy="173.5" r="17.2" fill="#f49aa5"/><text x="817.8" y="181.5" text-anchor="middle" font-family="Liberation Sans" font-size="23" fill="#3a3a3a">m</text><path d="M826 176L828.5 182H835L830 186L832 192.5L826 188.5L820 192.5L822 186L817 182H823.5Z" fill="#8a9bab"/><circle cx="886" cy="173.5" r="17.2" fill="#f49aa5"/><text x="886" y="181.5" text-anchor="middle" font-family="Liberation Sans" font-size="23" fill="#3a3a3a">m</text><circle cx="953.8" cy="173.5" r="17.2" fill="#c2a6ee"/><text x="953.8" y="181.5" text-anchor="middle" font-family="Liberation Sans" font-size="23" fill="#3a3a3a">p</text><circle cx="1021.8" cy="173.5" r="17.2" fill="#5bc4dd"/><path d="M1017.3 166h9M1017.3 181h9M1021.8 166v15" stroke="#3a3a3a" stroke-width="2.2" fill="none"/><path d="M1072 173.5Q1090 154 1108 173.5Q1090 193 1072 173.5Z" fill="#595959"/><circle cx="1090" cy="173.5" r="7.5" fill="#d9d9d9"/><circle cx="1090" cy="173.5" r="4.5" fill="#595959"/><path d="M1097 184H1111L1104 191Z" fill="#222"/><path d="M1142 158H1173L1161 174V189H1154V174Z" fill="#595959"/><path d="M1165 184H1179L1172 191Z" fill="#222"/><circle cx="1214.5" cy="160.5" r="4.5" fill="#595959"/><circle cx="1239" cy="186" r="4.5" fill="#595959"/><path d="M1214.5 160.5Q1226 162 1226 173.5Q1226 185 1239 186" stroke="#595959" stroke-width="3.5" fill="none"/><rect x="1268" y="150" width="2" height="45" fill="#c4c4c4"/><rect x="1356" y="150" width="2" height="45" fill="#c4c4c4"/><rect x="1648.2" y="150" width="2" height="45" fill="#c4c4c4"/><rect x="1736.3" y="150" width="2" height="45" fill="#c4c4c4"/><g transform="rotate(-45 1314 173.5)"><rect x="1296" y="167" width="19" height="13" rx="6.5" stroke="#595959" stroke-width="3.5" fill="none"/><rect x="1313" y="167" width="19" height="13" rx="6.5" stroke="#595959" stroke-width="3.5" fill="none"/></g><circle cx="1402" cy="173.5" r="15.3" stroke="#595959" stroke-width="3.5" fill="none"/><path d="M1392.5 173.5H1411.5M1402 164V183" stroke="#595959" stroke-width="4.5"/><circle cx="1470.2" cy="173.5" r="15.3" stroke="#595959" stroke-width="3.5" fill="none"/><path d="M1460.7 173.5H1479.7" stroke="#595959" stroke-width="4.5"/><path d="M1523 164.1H1530.4V183.6H1525.5V168.8H1523Z M1543 164.1H1550.4V183.6H1545.5V168.8H1543Z" fill="#595959"/><rect x="1535.7" y="166.5" width="4.5" height="5" fill="#595959"/><rect x="1535.7" y="176.6" width="4.5" height="4.6" fill="#595959"/><rect x="1590.5" y="159" width="31" height="29" stroke="#595959" stroke-width="3" fill="none"/><path d="M1597 171V165.5H1603M1615 176V182H1609" stroke="#595959" stroke-width="2.5" fill="none"/><rect x="1676" y="169.5" width="8.5" height="8" fill="#595959"/><rect x="1694.5" y="156.5" width="15" height="7" fill="#595959"/><rect x="1694.5" y="183.5" width="15" height="7" fill="#595959"/><path d="M1684 173.5L1696 160M1684 173.5L1696 187" stroke="#595959" stroke-width="3"/><path d="M1767 159H1797V188H1767Z" fill="#595959"/><rect x="1772.5" y="163" width="19" height="8" fill="#d9d9d9"/><rect x="1776" y="180.5" width="12" height="7.5" fill="#d9d9d9"/><path d="M1836.5 168V188H1856" stroke="#595959" stroke-width="3.5" fill="none"/><path d="M1843 181L1857 167" stroke="#595959" stroke-width="3.5"/><path d="M1849 159H1865V175Z" fill="#595959"/><rect x="1910" y="159" width="19" height="5.5" fill="#595959"/><rect x="1901" y="167" width="35" height="15" rx="2" fill="#595959"/><rect x="1908.5" y="177" width="20" height="12" stroke="#595959" stroke-width="2.5" fill="#d9d9d9"/><rect x="38.4" y="206" width="1.8" height="15.5" fill="#000"/><path d="M10.5 234H20L23 237.5H37V256H10.5Z" fill="#595959"/><rect x="38.4" y="456" width="1.8" height="16" fill="#000"/><rect x="13" y="497.5" width="9.5" height="9.5" fill="#595959"/><rect x="24.5" y="497.5" width="9.5" height="9.5" fill="#595959"/><rect x="24.5" y="487" width="9.5" height="9" fill="#595959"/><circle cx="24" cy="690" r="6.5" stroke="#595959" stroke-width="4" fill="none"/><path d="M8 690H16.5M31.5 690H39.5" stroke="#595959" stroke-width="4"/><rect x="38.4" y="1325" width="1.8" height="16" fill="#000"/><path d="M24 1351L27.6 1361.5H38.5L29.7 1368L33 1379L24 1372.5L15 1379L18.3 1368L9.5 1361.5H20.4Z" fill="#595959"/><circle cx="24" cy="1518" r="14" fill="#595959"/><path d="M17 1508Q22 1512 19 1517Q15 1521 20 1525M29 1510Q26 1515 31 1518Q34 1522 30 1528" stroke="#efefef" stroke-width="3" fill="none"/><rect x="10" y="1750.5" width="22" height="18" fill="#595959"/><rect x="22" y="1760" width="17" height="19.5" fill="#efefef"/><path d="M24 1762H38M24 1766H38M24 1770H38M24 1774H38M24 1778H38" stroke="#595959" stroke-width="2"/><rect x="3033" y="100" width="22" height="28" fill="#9fd8e8"/><path d="M3035 104h18M3035 109h18M3035 114h18M3035 119h18M3035 124h18" stroke="#5aa9c6" stroke-width="1.5" stroke-dasharray="2 1.5"/><ellipse cx="3044" cy="309" rx="8" ry="9.5" fill="#595959"/><circle cx="3044" cy="295" r="4.5" fill="#595959"/><path d="M3032 293L3039 299M3056 293L3049 299M3031 305H3057M3032 318L3039 312M3056 318L3049 312" stroke="#595959" stroke-width="2.2"/><text x="3044" y="448" text-anchor="middle" font-family="Liberation Sans" font-weight="bold" font-style="italic" font-size="36" fill="#595959">m</text><ellipse cx="3044" cy="605" rx="12" ry="4.5" fill="#595959"/><path d="M3032 612Q3044 619 3056 612M3032 619Q3044 626 3056 619M3032 605V622Q3044 631 3056 622V605" stroke="#595959" stroke-width="3.5" fill="none"/><path d="M3031 836A13 13 0 0 1 3056 831L3044 845L3038 850Q3031 845 3031 836Z" fill="#595959"/><path d="M3041 845L3046 850L3056 839" stroke="#595959" stroke-width="3" fill="none"/><path d="M330 1688.5L346.5 1705M346.5 1688.5L330 1705" stroke="#a8a8a8" stroke-width="2.2"/><path d="M403 1696H429M416 1683.5V1708.5" stroke="#6d6e6a" stroke-width="4.5"/><rect x="208" y="1724" width="168" height="5.5" fill="#9ca1a1"/><path d="M2912.2 1680.7 L2919.8 1680.7 L2920.3 1685.3 L2923.1 1686.9 L2927.4 1685.0 L2931.2 1691.6 L2927.4 1694.4 L2927.4 1697.6 L2931.2 1700.4 L2927.4 1707.0 L2923.1 1705.1 L2920.3 1706.7 L2919.8 1711.3 L2912.2 1711.3 L2911.7 1706.7 L2908.9 1705.1 L2904.6 1707.0 L2900.8 1700.4 L2904.6 1697.6 L2904.6 1694.4 L2900.8 1691.6 L2904.6 1685.0 L2908.9 1686.9 L2911.7 1685.3Z M2922 1696A6 6 0 1 0 2910 1696A6 6 0 1 0 2922 1696Z" fill="#595959" fill-rule="evenodd"/><rect x="2968.5" y="1693.5" width="30" height="5" fill="#595959"/><rect x="898.4" y="1731.6" width="19.6" height="47.8" stroke="#000" stroke-width="2" fill="none"/><rect x="2178" y="1810" width="208" height="56" fill="#b1b2b0"/><rect x="115.6" y="1853" width="14.400000000000006" height="2" fill="#000"/><rect x="278" y="1853" width="14" height="2" fill="#000"/><rect x="792.5" y="1853" width="14.5" height="2" fill="#000"/><rect x="81" y="1824" width="5" height="27" fill="#595959"/><rect x="86" y="1839" width="15.5" height="5" fill="#595959"/><rect x="96.5" y="1833" width="5" height="11" fill="#595959"/><path d="M91.8 1834H105.8L98.8 1824.6Z" fill="#595959"/><path d="M243 1826h4v4h-4zM243 1835h4v4h-4zM243 1844h4v4h-4z" fill="#595959"/><path d="M250 1828H267M250 1837H267M250 1846H267" stroke="#595959" stroke-width="3.5"/><rect x="452.2" y="1824.6" width="24.4" height="24" fill="#595959"/><rect x="463" y="1837.6" width="17.7" height="14.6" fill="#efefef" stroke="#595959" stroke-width="2.5"/><path d="M466.5 1840.5v8.5h3.5M466.5 1844.7h3M466.5 1840.5h3.5M473.5 1840.5v8.5h3.5M473.5 1844.7h3M473.5 1840.5h3.5" stroke="#595959" stroke-width="1.6" fill="none"/><path d="M760 1824.5H775.5L783 1837.5L775.5 1850.5H760L752.5 1837.5Z" fill="#595959"/><path d="M764.5 1830V1845L775 1837.5Z" fill="#efefef"/><path d="M1003.5 1828A6 6 0 0 1 1015.5 1828Z" fill="#595959"/><rect x="999.6" y="1829" width="20.4" height="22" rx="9" fill="#595959"/><rect x="999.6" y="1829" width="20.4" height="8" fill="#595959"/><path d="M1009.8 1831V1850" stroke="#efefef" stroke-width="1.6"/><path d="M995 1829L1001 1835M1024 1829L1018 1835M994 1840H1000M1019 1840H1025M995 1851L1001 1845M1024 1851L1018 1845" stroke="#595959" stroke-width="2.5"/><path d="M1215 1848Q1207 1840 1214 1833Q1221 1826 1242 1823Q1246 1836 1239 1844Q1230 1851 1215 1848Z" fill="#595959"/><path d="M1218 1847Q1232 1842 1238 1831" stroke="#efefef" stroke-width="1.5" fill="none"/><text x="1390" y="1844.5" font-family="Liberation Sans" font-weight="bold" font-size="22" letter-spacing="-1" fill="#595959">CS</text><path d="M1391 1850.5q2.5 -2 5 0t5 0t5 0t5 0t5 0t4 0" stroke="#d0021b" stroke-width="2" fill="none"/><rect x="1651" y="1824" width="9" height="27" fill="#e4a21d"/><path d="M1638 1831H1650M1660 1844H1669" stroke="#595959" stroke-width="2.5"/><path d="M1646 1828L1650 1831L1646 1834ZM1666 1841L1670 1844L1666 1847Z" fill="#595959"/><circle cx="2001.7" cy="1838" r="14" stroke="#d0021b" stroke-width="3.5" fill="none"/><path d="M1988 1838q3 -3 6 0t6 0t6 0t6 0t4 0" stroke="#d0021b" stroke-width="2.5" fill="none"/><rect x="2206" y="1824" width="28" height="25" fill="#595959"/><path d="M2211 1830L2217 1835L2211 1840" stroke="#b1b2b0" stroke-width="2.2" fill="none"/><path d="M2219 1843H2227" stroke="#b1b2b0" stroke-width="2.2"/><g transform="translate(2409 1822.5) scale(0.82) translate(-1630 -18.5)" fill="#595959"><path d="M1630 32.5L1645.5 18.5H1653L1649 22.5L1643 28.5L1637 38.5Z"/><path d="M1641 29L1665.5 50" stroke="#595959" stroke-width="8.5"/></g><circle cx="2609.7" cy="1838" r="16" fill="#2f9f4d"/><text x="2609.7" y="1847" text-anchor="middle" font-family="Liberation Sans" font-weight="bold" font-size="24" fill="#fff">1</text><rect x="2819.5" y="1823" width="37" height="32" fill="#fff" stroke="#8c8c8c" stroke-width="2"/><path d="M2822 1830H2854M2822 1838H2854M2822 1846H2854" stroke="#b0b0b0" stroke-width="1.5"/><path d="M2823 1838h10M2835 1842h10M2843 1834h8" stroke="#2f9f4d" stroke-width="2"/><path d="M2828 1846h12" stroke="#e4a21d" stroke-width="2"/><rect x="2822" y="1825" width="32" height="3" fill="#5aa9c6"/></svg>
<div class="t" style="left:71.0px;top:21.7px;font-size:28.5px;letter-spacing:0.66px;color:#000;">RequestMappingHandlerAdapter</div>
<div class="t" style="left:1766.4px;top:23.8px;font-size:28.5px;letter-spacing:0.81px;color:#000;">App (6)</div>
<div class="t" style="left:2490.7px;top:21.7px;font-size:28.5px;letter-spacing:0.09px;color:#000;">Git:</div>
<div class="t" style="left:118.0px;top:94.4px;font-size:30.0px;letter-spacing:0.59px;color:#000;">Project</div>
<div class="a" style="left:710px;top:73px;width:20px;height:68px;overflow:hidden"><div class="t" style="left:-56px;top:-73px;margin-top:93.6px;font-size:29.0px;letter-spacing:3.27px;color:#000;">java</div>
</div><div class="t" style="left:840.0px;top:93.6px;font-size:29.0px;letter-spacing:0.46px;color:#000;">HandlerAdapter.java</div>
<div class="t" style="left:1234.5px;top:93.6px;font-size:29.0px;letter-spacing:0.62px;color:#000;">AbstractHandlerMethodAdapter.java</div>
<div class="t" style="left:1844.4px;top:93.6px;font-size:29.0px;letter-spacing:0.40px;color:#000;">RequestMappingHandlerAdapter.java</div>
<div class="t" style="left:2462.5px;top:93.6px;font-size:29.0px;letter-spacing:0.39px;color:#000;">RequestMappingHandlerAdapter</div>
<div class="t" style="left:12.1px;top:220.8px;font-size:28.5px;color:#000;transform-origin:0 0;transform:rotate(-90deg);letter-spacing:0.27px">1: Project</div>
<div class="t" style="left:12.1px;top:474.0px;font-size:28.5px;color:#000;transform-origin:0 0;transform:rotate(-90deg);letter-spacing:0.92px">7: Structure</div>
<div class="t" style="left:12.1px;top:666.7px;font-size:28.5px;color:#000;transform-origin:0 0;transform:rotate(-90deg);letter-spacing:0.67px">Commit</div>
<div class="t" style="left:12.1px;top:1342.0px;font-size:28.5px;color:#000;transform-origin:0 0;transform:rotate(-90deg);letter-spacing:0.65px">2: Favorites</div>
<div class="t" style="left:12.1px;top:1492.0px;font-size:28.5px;color:#000;transform-origin:0 0;transform:rotate(-90deg);letter-spacing:-0.55px">Web</div>
<div class="t" style="left:12.1px;top:1739.0px;font-size:28.5px;color:#000;transform-origin:0 0;transform:rotate(-90deg);letter-spacing:0.69px">Persistence</div>
<div class="t" style="left:3056.1px;top:137.9px;font-size:28.5px;color:#000;transform-origin:0 0;transform:rotate(90deg);letter-spacing:0.90px">jclasslib</div>
<div class="t" style="left:3056.1px;top:331.4px;font-size:28.5px;color:#000;transform-origin:0 0;transform:rotate(90deg);letter-spacing:0.66px">Ant</div>
<div class="t" style="left:3056.1px;top:465.0px;font-size:28.5px;color:#000;transform-origin:0 0;transform:rotate(90deg);letter-spacing:-0.31px">Maven</div>
<div class="t" style="left:3056.1px;top:643.0px;font-size:28.5px;color:#000;transform-origin:0 0;transform:rotate(90deg);letter-spacing:0.07px">Database</div>
<div class="t" style="left:3056.1px;top:864.0px;font-size:28.5px;color:#000;transform-origin:0 0;transform:rotate(90deg);letter-spacing:0.57px">Bean Validation</div>
<div class="t" style="left:64.2px;top:1682.4px;font-size:30.5px;letter-spacing:0.30px;color:#000;">Terminal:</div>
<div class="t" style="left:238.4px;top:1682.4px;font-size:30.5px;letter-spacing:-0.38px;color:#000;">Local</div>
<div class="m" style="left:57.2px;top:1743.9px;font-size:33.25px;letter-spacing:0.03px;color:#000;">pdai@MacBook-Pro tech-pdai-spring-demos %</div>
<div class="t" style="left:114.6px;top:1825.8px;font-size:28.5px;letter-spacing:1.16px;color:#000;">9: Git</div>
<div class="t" style="left:277.0px;top:1825.8px;font-size:28.5px;letter-spacing:0.59px;color:#000;">6: TODO</div>
<div class="t" style="left:489.6px;top:1825.8px;font-size:28.5px;letter-spacing:0.60px;color:#000;">Java Enterprise</div>
<div class="t" style="left:791.5px;top:1825.8px;font-size:28.5px;letter-spacing:0.73px;color:#000;">8: Services</div>
<div class="t" style="left:1033.0px;top:1825.8px;font-size:28.5px;letter-spacing:0.77px;color:#000;">SpotBugs</div>
<div class="t" style="left:1251.0px;top:1825.8px;font-size:28.5px;letter-spacing:0.72px;color:#000;">Spring</div>
<div class="t" style="left:1429.0px;top:1825.8px;font-size:28.5px;letter-spacing:0.76px;color:#000;">CheckStyle</div>
<div class="t" style="left:1678.0px;top:1825.8px;font-size:28.5px;letter-spacing:0.40px;color:#000;">Sequence Diagram</div>
<div class="t" style="left:2025.0px;top:1825.8px;font-size:28.5px;letter-spacing:0.75px;color:#000;">SonarLint</div>
<div class="t" style="left:2243.8px;top:1825.8px;font-size:28.5px;letter-spacing:0.93px;color:#000;">Terminal</div>
<div class="t" style="left:2448.8px;top:1825.8px;font-size:28.5px;letter-spacing:0.91px;color:#000;">Build</div>
<div class="t" style="left:2633.0px;top:1825.8px;font-size:28.5px;letter-spacing:0.56px;color:#000;">Event Log</div>
<div class="t" style="left:2865.6px;top:1825.8px;font-size:28.5px;letter-spacing:0.08px;color:#000;">VisualGC</div>
</body></html>
